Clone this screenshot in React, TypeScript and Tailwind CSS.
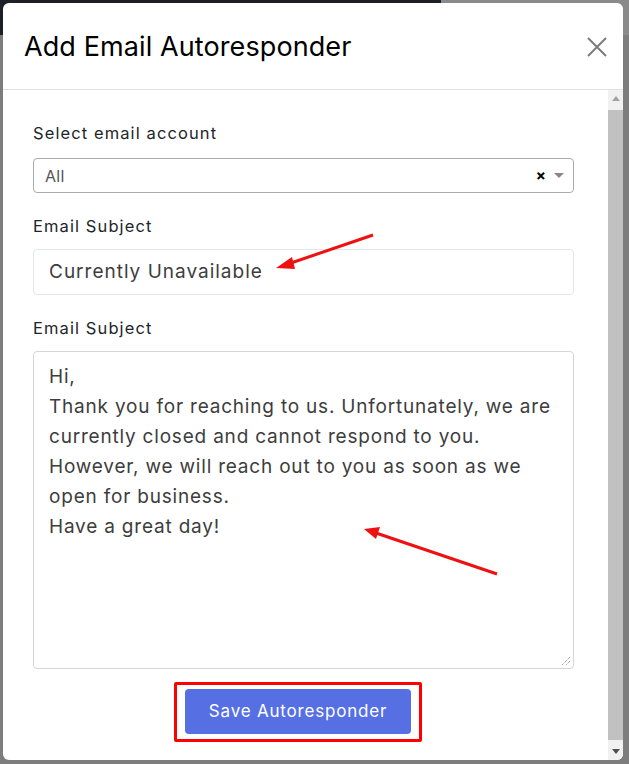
import React from 'react'

const font = { fontFamily: 'Inter, "Noto Sans", sans-serif' }

function Scrollbar() {
  return (
    <div className="w-[15px] bg-[#f1f1f1] flex flex-col items-center flex-shrink-0">
      <div className="h-[17px] flex items-center justify-center">
        <div className="w-0 h-0 border-l-[4px] border-r-[4px] border-b-[5px] border-l-transparent border-r-transparent border-b-[#a3a3a3]" />
      </div>
      <div className="w-[15px] flex-1 bg-[#c1c1c1] my-[3px]" />
      <div className="h-[17px] flex items-center justify-center">
        <div className="w-0 h-0 border-l-[4px] border-r-[4px] border-t-[5px] border-l-transparent border-r-transparent border-t-[#505050]" />
      </div>
    </div>
  )
}

export default function App() {
  return (
    <div className="relative w-[629px] h-[764px] bg-[#7d7d7d] overflow-hidden" style={font}>
      <div className="h-[35px] bg-[#1d2029] flex justify-end">
        <div className="w-[188px] h-[35px] bg-[#8a8a8a]" />
      </div>

      <div className="absolute left-[3px] top-[3px] w-[620px] h-[757px] bg-white rounded-[6px] flex flex-col overflow-hidden">
        <div className="h-[87px] flex items-center justify-between pl-[21px] pr-[15px] border-b border-[#dee2e6] flex-shrink-0">
          <h1 className="text-[27px] text-black tracking-[0.1px] mt-[2px]">Add Email Autoresponder</h1>
          <svg width="22" height="22" viewBox="0 0 22 22" className="mt-[2px]">
            <path d="M2 2L20 20M20 2L2 20" stroke="#7c7c7c" strokeWidth="2" />
          </svg>
        </div>

        <div className="flex flex-1 min-h-0">
          <div className="flex-1 pl-[30px] pr-[34px] pt-[31px]">
            <label className="block text-[16.5px] tracking-[1.1px] text-[#212529] leading-[24px]">Select email account</label>
            <div className="mt-[13px] h-[35px] border border-[#aaaaaa] rounded-[4px] flex items-center pl-[11px] pr-[9px]">
              <span className="flex-1 text-[16px] tracking-[0.3px] text-[#555]">All</span>
              <span className="text-[15px] font-bold text-black mr-[8px] leading-none">×</span>
              <div className="w-0 h-0 border-l-[5px] border-r-[5px] border-t-[5px] border-l-transparent border-r-transparent border-t-[#888]" />
            </div>

            <label className="block mt-[21px] text-[16.5px] tracking-[1.1px] text-[#212529] leading-[24px]">Email Subject</label>
            <div className="mt-[11px] h-[46px] border border-[#e3e6ea] rounded-[4px] flex items-center pl-[15px]">
              <span className="text-[19px] tracking-[1px] text-[#3d3d3d]">Currently Unavailable</span>
            </div>

            <label className="block mt-[21px] text-[16.5px] tracking-[1.1px] text-[#212529] leading-[24px]">Email Subject</label>
            <div className="relative mt-[11px] h-[318px] border border-[#d3d6db] rounded-[4px] pl-[15px] pr-[12px] pt-[10px]">
              <p className="text-[19px] tracking-[0.8px] leading-[30px] text-[#3d3d3d]">
                Hi,<br />
                Thank you for reaching to us. Unfortunately, we are currently closed and cannot respond to you.<br />
                However, we will reach out to you as soon as we open for business.<br />
                Have a great day!
              </p>
              <svg width="10" height="10" viewBox="0 0 10 10" className="absolute right-[2px] bottom-[2px]">
                <path d="M9 1L1 9M9 5L5 9" stroke="#777" strokeWidth="1" strokeDasharray="1 1" />
              </svg>
            </div>

            <div className="flex justify-center mt-[13px] mr-[11px]">
              <div className="border-[3px] border-[#ff0000] rounded-[2px] pl-[8px] pr-[8px] pt-[4px] pb-[5px]">
                <button className="w-[226px] h-[45px] bg-[#5670e4] rounded-[4px] text-white text-[17px] tracking-[0.8px]">
                  Save Autoresponder
                </button>
              </div>
            </div>
          </div>
          <Scrollbar />
        </div>
      </div>

      <svg className="absolute left-0 top-0 pointer-events-none" width="629" height="764">
        <g stroke="#ee1111" strokeWidth="3" fill="#ee1111">
          <line x1="373" y1="235" x2="288" y2="264" />
          <polygon points="276,268 292,257 295,269" stroke="none" />
          <line x1="497" y1="574" x2="376" y2="533" />
          <polygon points="364,529 380,527 376,539" stroke="none" />
        </g>
      </svg>
    </div>
  )
}
